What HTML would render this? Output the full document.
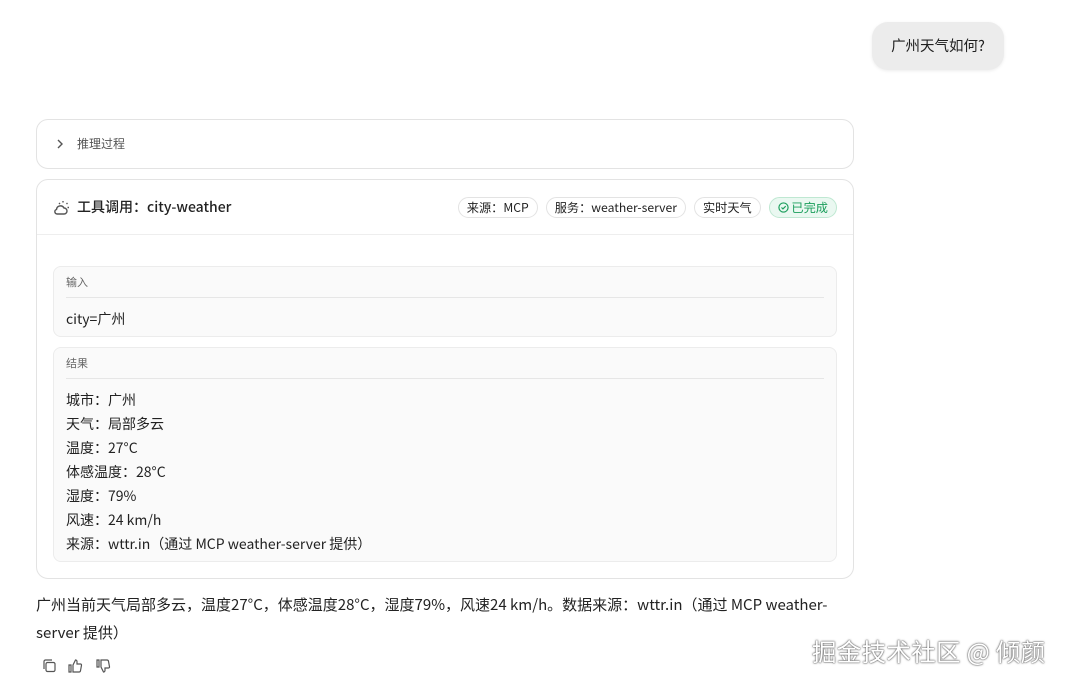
<!DOCTYPE html>
<html><head><meta charset="utf-8"><style>
*{box-sizing:border-box;margin:0;padding:0}
body{width:1068px;height:687px;background:#fff;font-family:"Noto Sans CJK SC","Liberation Sans",sans-serif;color:#1f1f1f;position:relative;overflow:hidden}
.bubble{position:absolute;left:872px;top:22px;width:132px;height:48px;background:#ececec;border-radius:16px;font-size:14.5px;line-height:48px;text-align:center;box-shadow:0 1px 3px rgba(0,0,0,.08)}
.reason{position:absolute;left:36px;top:119px;width:818px;height:50px;border:1px solid #e3e3e3;border-radius:12px;font-size:12px;color:#555;line-height:48px;padding-left:40px}
.reason svg{position:absolute;left:18px;top:18px}
.card{position:absolute;left:36px;top:179px;width:818px;height:400px;border:1px solid #e3e3e3;border-radius:12px}
.hdr{height:55px;border-bottom:1px solid #eee;position:relative}
.title{position:absolute;left:40px;top:16px;font-size:14px;font-weight:500;color:#222;line-height:22px}
.tags{position:absolute;right:16px;top:17px;display:flex;gap:8px}
.tag{height:21px;border:1px solid #e3e3e3;border-radius:11px;font-size:12.2px;line-height:19px;padding:0 8px;color:#222}
.tag.ok{background:#eaf8f1;border-color:#bfe8d2;color:#1a9e5b}
.box{position:absolute;left:16px;width:784px;background:#fafafa;border:1px solid #ececec;border-radius:8px;padding:0 12px}
.lbl{font-size:11px;color:#666;height:31px;line-height:30px;border-bottom:1px solid #e6e6e6}
.body{font-size:14px;line-height:24px;color:#222}
.ans{position:absolute;left:36px;top:591px;width:800px;font-size:15px;line-height:28px;color:#222}
.wm{position:absolute;left:812px;top:634px;font-size:24.5px;color:#fff;text-shadow:0 0 2px #555,0 0 1px #333;letter-spacing:0.3px;white-space:nowrap}
</style></head><body>
<div class="bubble">广州天气如何?</div>
<div class="reason"><svg width="10" height="12" viewBox="0 0 10 12"><path d="M3 2l4 4-4 4" fill="none" stroke="#555" stroke-width="1.4"/></svg>推理过程</div>
<div class="card">
<div class="hdr">
<svg style="position:absolute;left:16px;top:19px" width="18" height="18" viewBox="0 0 18 18" fill="none" stroke="#555" stroke-width="1.4"><path d="M4 15h7a3 3 0 0 0 0-6 4 4 0 0 0-7.5 1.5A2.3 2.3 0 0 0 4 15z"/><path d="M10 2v1.5M14.5 4l-1 1M16 8.5h-1.5M6 4l1 1"/></svg>
<div class="title">工具调用：city-weather</div>
<div class="tags"><div class="tag">来源：MCP</div><div class="tag">服务：weather-server</div><div class="tag">实时天气</div><div class="tag ok"><svg width="11" height="11" viewBox="0 0 12 12" style="vertical-align:-1px" fill="none" stroke="#1a9e5b" stroke-width="1.3"><circle cx="6" cy="6" r="5"/><path d="M3.8 6l1.6 1.6 3-3"/></svg> 已完成</div></div>
</div>
<div class="box" style="top:86px;height:71px"><div class="lbl">输入</div><div class="body" style="padding-top:9px">city=广州</div></div>
<div class="box" style="top:167px;height:215px"><div class="lbl">结果</div><div class="body" style="padding-top:9px">城市：广州<br>天气：局部多云<br>温度：27°C<br>体感温度：28°C<br>湿度：79%<br>风速：24 km/h<br>来源：wttr.in（通过 MCP weather-server 提供）</div></div>
</div>
<div class="ans">广州当前天气局部多云，温度27°C，体感温度28°C，湿度79%，风速24 km/h。数据来源：wttr.in（通过 MCP weather-server 提供）</div>
<svg style="position:absolute;left:42px;top:658px" width="76" height="16" viewBox="0 0 76 16" fill="none" stroke="#555" stroke-width="1.2">
<rect x="4" y="4.5" width="9" height="9" rx="1.5"/><path d="M2 11V3.5A1.5 1.5 0 0 1 3.5 2H10"/>
<path d="M29 7v7h-2V7zM31 7l2.5-5a1.5 1.5 0 0 1 1.5 1.5V6h3.5a1 1 0 0 1 1 1.2l-1 5.5a1.5 1.5 0 0 1-1.5 1.3H31z"/>
<path d="M57 9V2h-2v7zM59 9l2.5 5a1.5 1.5 0 0 0 1.5-1.5V10h3.5a1 1 0 0 0 1-1.2l-1-5.5A1.5 1.5 0 0 0 65 2H59z"/>
</svg>
<div class="wm">掘金技术社区 @ 倾颜</div>
</body></html>
